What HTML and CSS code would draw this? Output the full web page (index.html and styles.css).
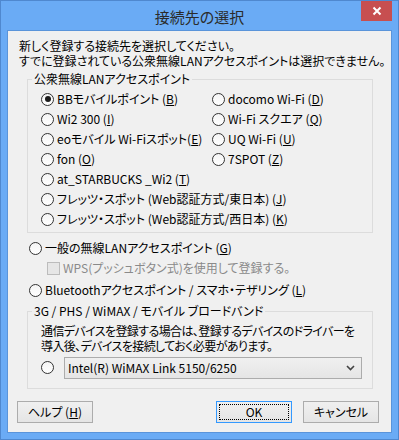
FILE: index.html
```html
<!DOCTYPE html>
<html lang="ja">
  <head>
    <meta charset="UTF-8" />
    <title>接続先の選択</title>
    <link rel="stylesheet" href="styles.css">
  </head>
  <body>
    <div class="window">
      <div class="titlebar">
        <span class="title">接続先の選択</span>
        <span class="close">
          <svg width="10" height="10" viewBox="0 0 10 10">
            <path d="M1.5 1.5 L8.5 8.5 M8.5 1.5 L1.5 8.5" stroke="#fff" stroke-width="2" fill="none" />
          </svg>
        </span>
      </div>
      <div class="client">
        <p class="intro">
          新しく登録する接続先を選択してください。<br />
          すでに登録されている公衆無線LANアクセスポイントは選択できません。
        </p>

        <fieldset class="group">
          <legend>公衆無線LANアクセスポイント</legend>
          <div class="spots">
            <label class="opt"><span class="radio checked"></span>BBモバイルポイント (<u>B</u>)</label>
            <label class="opt"><span class="radio"></span>docomo Wi-Fi (<u>D</u>)</label>
            <label class="opt"><span class="radio"></span>Wi2 300 (<u>I</u>)</label>
            <label class="opt"><span class="radio"></span>Wi-Fi スクエア (<u>Q</u>)</label>
            <label class="opt"><span class="radio"></span>eoモバイル Wi-Fiスポット(<u>E</u>)</label>
            <label class="opt"><span class="radio"></span>UQ Wi-Fi (<u>U</u>)</label>
            <label class="opt"><span class="radio"></span>fon (<u>O</u>)</label>
            <label class="opt"><span class="radio"></span>7SPOT (<u>Z</u>)</label>
            <label class="opt wide"><span class="radio"></span>at_STARBUCKS _Wi2 (<u>T</u>)</label>
            <label class="opt wide"><span class="radio"></span>フレッツ・スポット (Web認証方式/東日本) (<u>J</u>)</label>
            <label class="opt wide"><span class="radio"></span>フレッツ・スポット (Web認証方式/西日本) (<u>K</u>)</label>
          </div>
        </fieldset>

        <div class="others">
          <label class="opt"><span class="radio"></span>一般の無線LANアクセスポイント (<u>G</u>)</label>
          <label class="opt sub disabled"><span class="check"></span>WPS(プッシュボタン式)を使用して登録する。</label>
          <label class="opt bt"><span class="radio"></span>Bluetoothアクセスポイント / スマホ・テザリング (<u>L</u>)</label>
        </div>

        <fieldset class="group">
          <legend>3G / PHS / WiMAX / モバイル ブロードバンド</legend>
          <div class="mobile">
            <p class="desc">
              通信デバイスを登録する場合は、登録するデバイスのドライバーを<br />
              導入後、デバイスを接続しておく必要があります。
            </p>
            <div class="device">
              <span class="radio"></span>
              <div class="combo">
                <span>Intel(R) WiMAX Link 5150/6250</span>
                <svg width="9" height="6" viewBox="0 0 9 6">
                  <path d="M1 1 L4.5 4.5 L8 1" stroke="#444" stroke-width="1.6" fill="none" />
                </svg>
              </div>
            </div>
          </div>
        </fieldset>

        <div class="buttons">
          <button>ヘルプ (<u>H</u>)</button>
          <span class="spacer"></span>
          <button class="default"><span class="focus">OK</span></button>
          <button>キャンセル</button>
        </div>
      </div>
    </div>
  </body>
</html>
```

FILE: styles.css
```css
* {
  box-sizing: border-box;
}

html,
body {
  background-color: #6aabf5;
  margin: 0;
}

body {
  color: #000;
  font-family: "Noto Sans CJK JP", "Noto Sans", sans-serif;
  font-feature-settings: "palt";
  font-size: 12px;
  line-height: 14px;
}

.window {
  background-color: #6aabf5;
  border: 1px solid #4f88cf;
  display: flex;
  flex-direction: column;
  height: 440px;
  padding: 0 6px 6px;
  position: relative;
  width: 399px;
}

.titlebar {
  align-items: center;
  display: flex;
  flex-shrink: 0;
  height: 29px;
  justify-content: center;
}

.title {
  color: #2b2b2b;
  font-size: 15px;
  line-height: 18px;
  margin-top: 2px;
}

.close {
  align-items: center;
  background-color: #c74f50;
  display: flex;
  height: 20px;
  justify-content: center;
  position: absolute;
  right: 6px;
  top: 0;
  width: 31px;
}

.client {
  background-color: #f0f0f0;
  border: 1px solid #5a94da;
  display: flex;
  flex-direction: column;
  flex-grow: 1;
  min-height: 0;
}

.client > * {
  flex-shrink: 0;
}

.intro {
  line-height: 15px;
  margin: 7px 0 0 11px;
  white-space: nowrap;
}

.group {
  border: 1px solid #dcdcdc;
  margin: 4px 18px 0 19px;
  min-width: 0;
  padding: 0;
}

.group legend {
  margin-left: 4px;
  padding: 0 2px;
}

.spots {
  display: grid;
  grid-auto-rows: 20px;
  grid-template-columns: 171px 1fr;
  padding: 3px 0 3px 13px;
}

.wide {
  grid-column: 1 / -1;
}

.opt {
  align-items: center;
  display: flex;
  height: 20px;
  white-space: nowrap;
}

.radio {
  background: linear-gradient(#f4f4f4, #ffffff);
  border: 1px solid #333;
  border-radius: 50%;
  flex-shrink: 0;
  height: 13px;
  margin-right: 3px;
  position: relative;
  width: 13px;
}

.radio.checked::after {
  background-color: #1c1c1c;
  border-radius: 50%;
  content: "";
  height: 6px;
  left: 2.5px;
  position: absolute;
  top: 2.5px;
  width: 6px;
}

.others {
  margin: 5px 0 0 21px;
}

.sub {
  padding-left: 18px;
}

.check {
  background-color: #e6e6e6;
  border: 1px solid #bcbcbc;
  flex-shrink: 0;
  height: 13px;
  margin-right: 3px;
  width: 13px;
}

.disabled {
  color: #8a8a8a;
}

.bt {
  margin-top: 2px;
}

.mobile {
  padding: 5px 10px 9px 13px;
}

.desc {
  letter-spacing: -0.6px;
  line-height: 15px;
  margin: 0;
  white-space: nowrap;
}

.device {
  align-items: center;
  display: flex;
  gap: 10px;
  margin-top: 4px;
}

.device .radio {
  margin: -2px 0 0;
}

.combo {
  align-items: center;
  background: linear-gradient(#f0f0f0, #e5e5e5);
  border: 1px solid #acacac;
  display: flex;
  flex-grow: 1;
  height: 22px;
  justify-content: space-between;
  padding: 0 6px 0 3px;
}

.buttons {
  display: flex;
  gap: 11px;
  margin: 12px 12px 0 9px;
}

.spacer {
  flex-grow: 1;
}

button {
  background: linear-gradient(#f0f0f0, #e5e5e5);
  border: 1px solid #acacac;
  color: #000;
  font: inherit;
  height: 22px;
  padding: 0;
  width: 76px;
}

button.default {
  border-color: #3399ff;
  padding: 2px;
}

.focus {
  align-items: center;
  border: 1px dotted #000;
  display: flex;
  height: 100%;
  justify-content: center;
}
```
